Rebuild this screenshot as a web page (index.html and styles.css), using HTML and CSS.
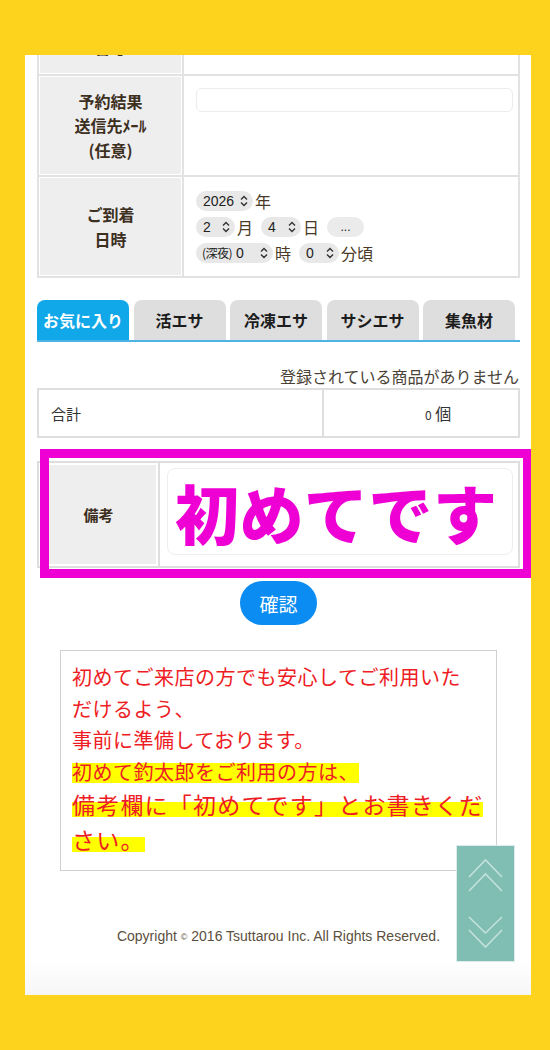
FILE: index.html
```html
<!DOCTYPE html>
<html lang="ja">
<head>
<meta charset="utf-8">
<title>予約フォーム</title>
<link rel="stylesheet" href="styles.css">
</head>
<body>
<div class="frame">
  <main class="panel">
    <table class="form-table">
      <tr class="row-tel"><th>電話<br>番号</th><td></td></tr>
      <tr class="row-mail"><th>予約結果<br>送信先ﾒｰﾙ<br>(任意)</th><td class="cell-top"><span class="text-input"></span></td></tr>
      <tr class="row-date"><th>ご到着<br>日時</th><td class="cell-date">
        <div class="date-line"><span class="pill w-year">2026<svg class="caret" viewBox="0 0 8 12"><path d="M1 4.5 4 1.5 7 4.5M1 7.5 4 10.5 7 7.5"/></svg></span><span class="unit">年</span></div>
        <div class="date-line"><span class="pill w-month">2<svg class="caret" viewBox="0 0 8 12"><path d="M1 4.5 4 1.5 7 4.5M1 7.5 4 10.5 7 7.5"/></svg></span><span class="unit">月</span><span class="pill w-day">4<svg class="caret" viewBox="0 0 8 12"><path d="M1 4.5 4 1.5 7 4.5M1 7.5 4 10.5 7 7.5"/></svg></span><span class="unit">日</span><span class="pill more">...</span></div>
        <div class="date-line"><span class="pill w-hour"><span><span class="small">(深夜)</span> 0</span><svg class="caret" viewBox="0 0 8 12"><path d="M1 4.5 4 1.5 7 4.5M1 7.5 4 10.5 7 7.5"/></svg></span><span class="unit">時</span><span class="pill w-min">0<svg class="caret" viewBox="0 0 8 12"><path d="M1 4.5 4 1.5 7 4.5M1 7.5 4 10.5 7 7.5"/></svg></span><span class="unit">分頃</span></div>
      </td></tr>
    </table>

    <nav class="tabs">
      <span class="tab active">お気に入り</span>
      <span class="tab">活エサ</span>
      <span class="tab">冷凍エサ</span>
      <span class="tab">サシエサ</span>
      <span class="tab">集魚材</span>
    </nav>

    <p class="empty">登録されている商品がありません</p>

    <table class="total">
      <tr><td class="total-label">合計</td><td class="qty"><span class="num">0</span> 個</td></tr>
    </table>

    <div class="remark-wrap">
      <table class="remark">
        <tr><th>備考</th><td><div class="remark-input">初めてです</div></td></tr>
      </table>
      <div class="highlight-frame"></div>
    </div>

    <div class="confirm-row"><button class="confirm" type="button">確認</button></div>

    <div class="notice">初めてご来店の方でも安心してご利用いた<br>だけるよう、<br>事前に準備しております。<br><span class="hl">初めて釣太郎をご利用の方は、</span><br><span class="hl big">備考欄に「初めてです」とお書きくだ</span><br><span class="hl big">さい。</span></div>

    <footer class="copyright">Copyright <span class="copy">©</span> 2016 Tsuttarou Inc. All Rights Reserved.</footer>

    <div class="scroll-nav">
      <svg viewBox="0 0 57 115" width="57" height="115">
        <polyline points="12,31 28.5,14 45,31"/>
        <polyline points="12,45 28.5,28 45,45"/>
        <polyline points="12,71 28.5,87 45,71"/>
        <polyline points="12,84 28.5,101 45,84"/>
      </svg>
    </div>
  </main>
</div>
</body>
</html>
```

FILE: styles.css
```css
* { box-sizing: border-box; }
html, body { margin: 0; padding: 0; }
body {
  background: #fdd31d;
  font-family: "Noto Sans CJK JP", "Noto Sans", sans-serif;
  color: #3c2f1e;
}
.frame { padding: 55px 19px 55px 25px; }
.panel {
  position: relative;
  height: 940px;
  overflow: hidden;
  background: linear-gradient(#fff 0, #fff 905px, #f6f6f6 940px);
  padding: 0 11px 0 12px;
}

/* top form table */
.form-table {
  width: 100%;
  border-collapse: collapse;
  margin-top: -57px;
}
.form-table th, .form-table td {
  border: 2px solid #e2e2e2;
  padding: 0;
}
.form-table th {
  width: 145px;
  background: #eeeeee;
  box-shadow: inset 0 0 0 1px #fff;
  font-weight: 700;
  font-size: 16px;
  line-height: 24.5px;
  text-align: center;
  color: #3c2f1e;
}
.row-tel { height: 76px; }
.row-tel th { padding-bottom: 5px; }
.row-mail { height: 101px; }
.row-date { height: 101px; }
.cell-top { vertical-align: top; padding: 12px 5px 0 12px !important; }
.text-input {
  display: block;
  height: 24px;
  border: 1px solid #ececec;
  border-radius: 6px;
}
.cell-date { padding-left: 12px !important; vertical-align: middle; }
.date-line { display: flex; align-items: center; height: 20px; margin: 6px 0; }
.pill {
  display: inline-flex;
  align-items: center;
  justify-content: space-between;
  height: 20px;
  border-radius: 10px;
  background: #e8e8e8;
  padding: 0 5px 0 7px;
  font-family: "Liberation Sans", Arial, sans-serif;
  font-size: 14px;
  color: #222;
}
.pill .small { font-family: "Noto Sans CJK JP", sans-serif; font-size: 12px; letter-spacing: -0.5px; }
.caret { width: 8px; height: 12px; fill: none; stroke: #333; stroke-width: 1.4; flex: none; }
.w-year { width: 57px; }
.w-month { width: 39px; }
.w-day { width: 40px; }
.w-hour { width: 77px; padding-left: 6px; }
.w-min { width: 40px; }
.more { width: 37px; justify-content: center; padding: 0; background: #ebebeb; font-size: 12px; }
.unit {
  font-size: 16px;
  line-height: 20px;
  color: #4a3a25;
  margin: 0 8px 0 2px;
}

/* tabs */
.tabs {
  display: flex;
  gap: 4.5px;
  margin-top: 22px;
  border-bottom: 2px solid #4db5e3;
}
.tab {
  flex: 0 0 92px;
  height: 40px;
  border-radius: 8px 8px 0 0;
  background: #dedede;
  display: flex;
  align-items: center;
  justify-content: center;
  font-weight: 700;
  font-size: 16px;
  color: #1c1c1c;
}
.tab.active { background: #10a8e9; color: #fff; }

.empty {
  margin: 0;
  padding: 22px 1px 0 0;
  text-align: right;
  font-size: 16px;
  line-height: 24px;
  color: #4a4236;
}

/* total */
.total { width: 100%; border-collapse: collapse; height: 50px; }
.total td { border: 2px solid #dedede; font-size: 15px; color: #333; }
.total-label { width: 285px; padding-left: 12px; }
.qty { padding-left: 101px; font-size: 16px !important; }
.qty .num { font-size: 12px; }

/* remark */
.remark-wrap { position: relative; margin-top: 23px; }
.remark { width: 100%; border-collapse: collapse; height: 107px; }
.remark th, .remark td { border: 2px solid #dedede; padding: 0; }
.remark th {
  width: 121px;
  background: #eeeeee;
  box-shadow: inset 0 0 0 2px #fff;
  font-size: 15px;
  font-weight: 700;
  color: #3c2f1e;
}
.remark td { padding: 5px 5px 11px 7px; border-left-width: 1px; }
.remark-input {
  height: 87px;
  border: 1px solid #eeeeee;
  border-radius: 8px;
  padding-left: 7px;
  font-size: 64px;
  font-weight: 900;
  line-height: 84px;
  color: #ee00d4;
  white-space: nowrap;
  letter-spacing: 0.5px;
}
.highlight-frame {
  position: absolute;
  left: 3px;
  top: -12px;
  width: 492px;
  height: 129px;
  border: 9px solid #ee00d4;
  pointer-events: none;
}

/* confirm */
.confirm-row { margin-top: 13px; display: flex; justify-content: center; }
.confirm {
  width: 77px;
  height: 44px;
  border: none;
  border-radius: 22px;
  background: #0a8cf2;
  color: #fff;
  font-family: "Noto Sans CJK JP", sans-serif;
  font-size: 19px;
  padding: 0;
}

/* notice */
.notice {
  margin: 25px 23px 0;
  border: 1.5px solid #d0d0d0;
  padding: 10px 8px 13px 11px;
  color: #ee1c24;
  font-size: 20px;
  line-height: 31.5px;
  letter-spacing: 0.5px;
  white-space: nowrap;
}
.hl { background: linear-gradient(transparent 19%, #ffff00 19%, #ffff00 88%, transparent 88%); }
.big {
  font-size: 23px;
  line-height: 35px;
  letter-spacing: 1.2px;
  background: linear-gradient(transparent 43%, #ffff00 43%, #ffff00 89%, transparent 89%);
}

/* footer */
.copyright {
  margin-top: 56px;
  text-align: center;
  font-family: "Liberation Sans", Arial, sans-serif;
  font-size: 14px;
  line-height: 18px;
  color: #5b4f3d;
}
.copy { font-size: 9px; vertical-align: 1px; }

.scroll-nav {
  position: absolute;
  left: 432px;
  top: 791px;
  width: 57px;
  height: 115px;
  background: #80bdb3;
  outline: 1px solid #dcecea;
}
.scroll-nav svg { display: block; fill: none; stroke: #c3e2dc; stroke-width: 1.6; }
```
